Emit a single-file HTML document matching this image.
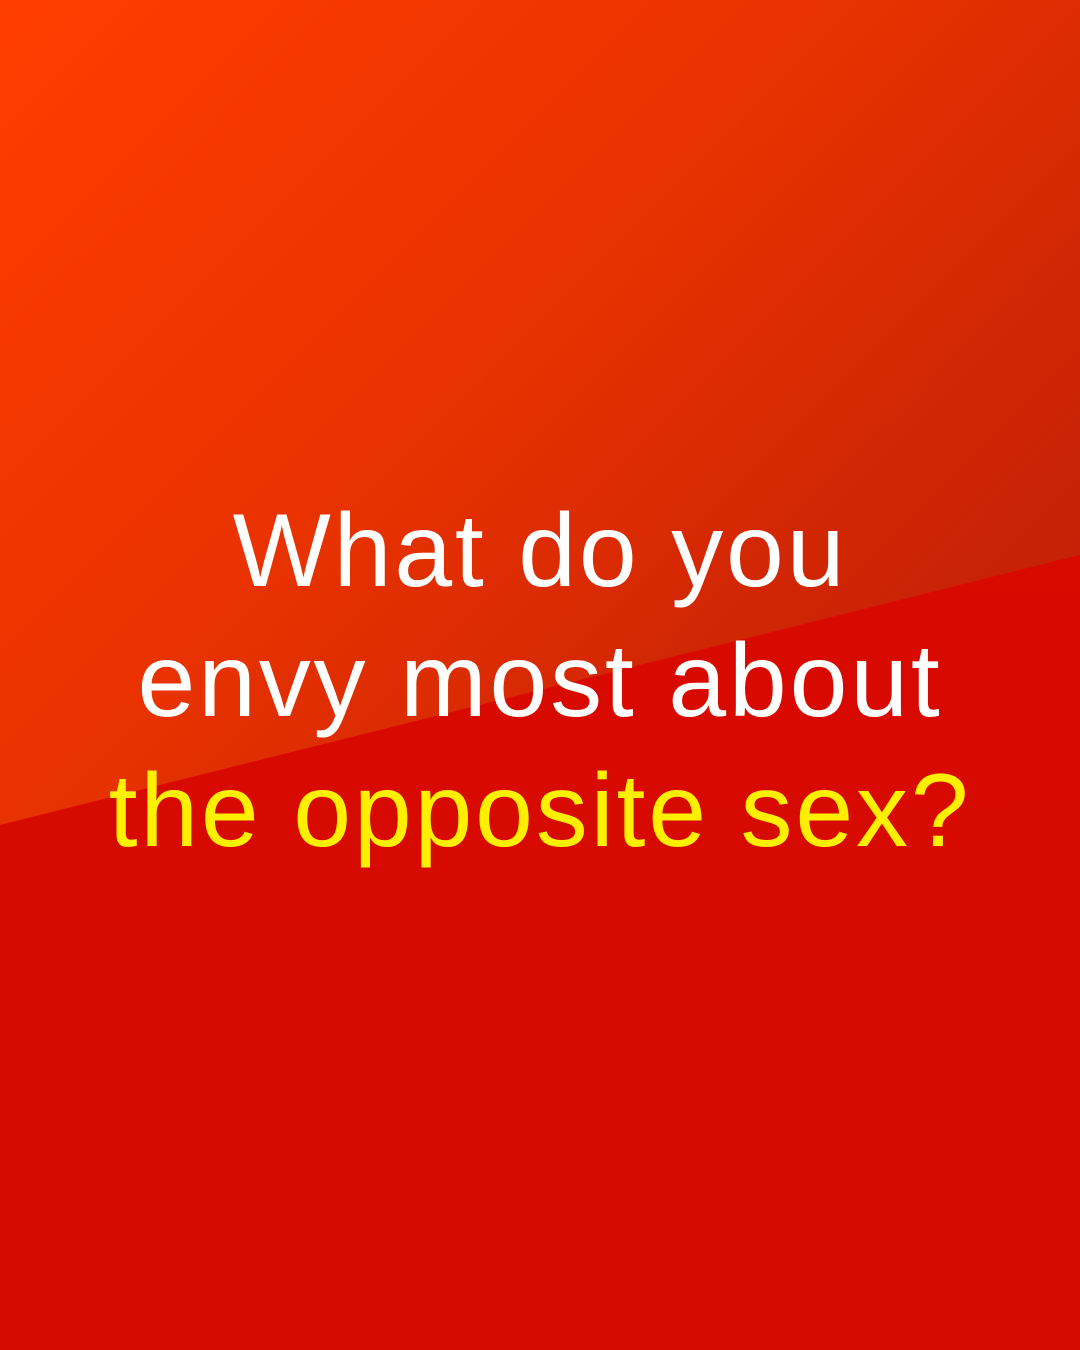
<!DOCTYPE html>
<html><head><meta charset="utf-8"><style>
html,body{margin:0;padding:0}
body{width:1080px;height:1350px;position:relative;overflow:hidden;background:#d80a00;font-family:"Liberation Sans",sans-serif}
.top{position:absolute;left:0;top:0;width:1080px;height:1350px;
background:linear-gradient(135deg,#ff3d00 0%,#e83200 35%,#cc2405 60%,#b81d0a 80%);
clip-path:polygon(0 0,1080px 0,1080px 555px,0 825px)}
.bot{position:absolute;left:0;top:0;width:1080px;height:1350px;
background:linear-gradient(180deg,#d90a00 40%,#d40a00 100%);
clip-path:polygon(0 825px,1080px 555px,1080px 1350px,0 1350px)}
.l{position:absolute;left:0;width:1080px;text-align:center;font-size:104px;line-height:130px;color:#fff;white-space:nowrap;letter-spacing:2.8px}
.y{color:#fff000}
</style></head><body>
<div class="top"></div><div class="bot"></div>
<div class="l" style="top:486px">What do you</div>
<div class="l" style="top:616px">envy most about</div>
<div class="l y" style="top:746px">the opposite sex?</div>
</body></html>
